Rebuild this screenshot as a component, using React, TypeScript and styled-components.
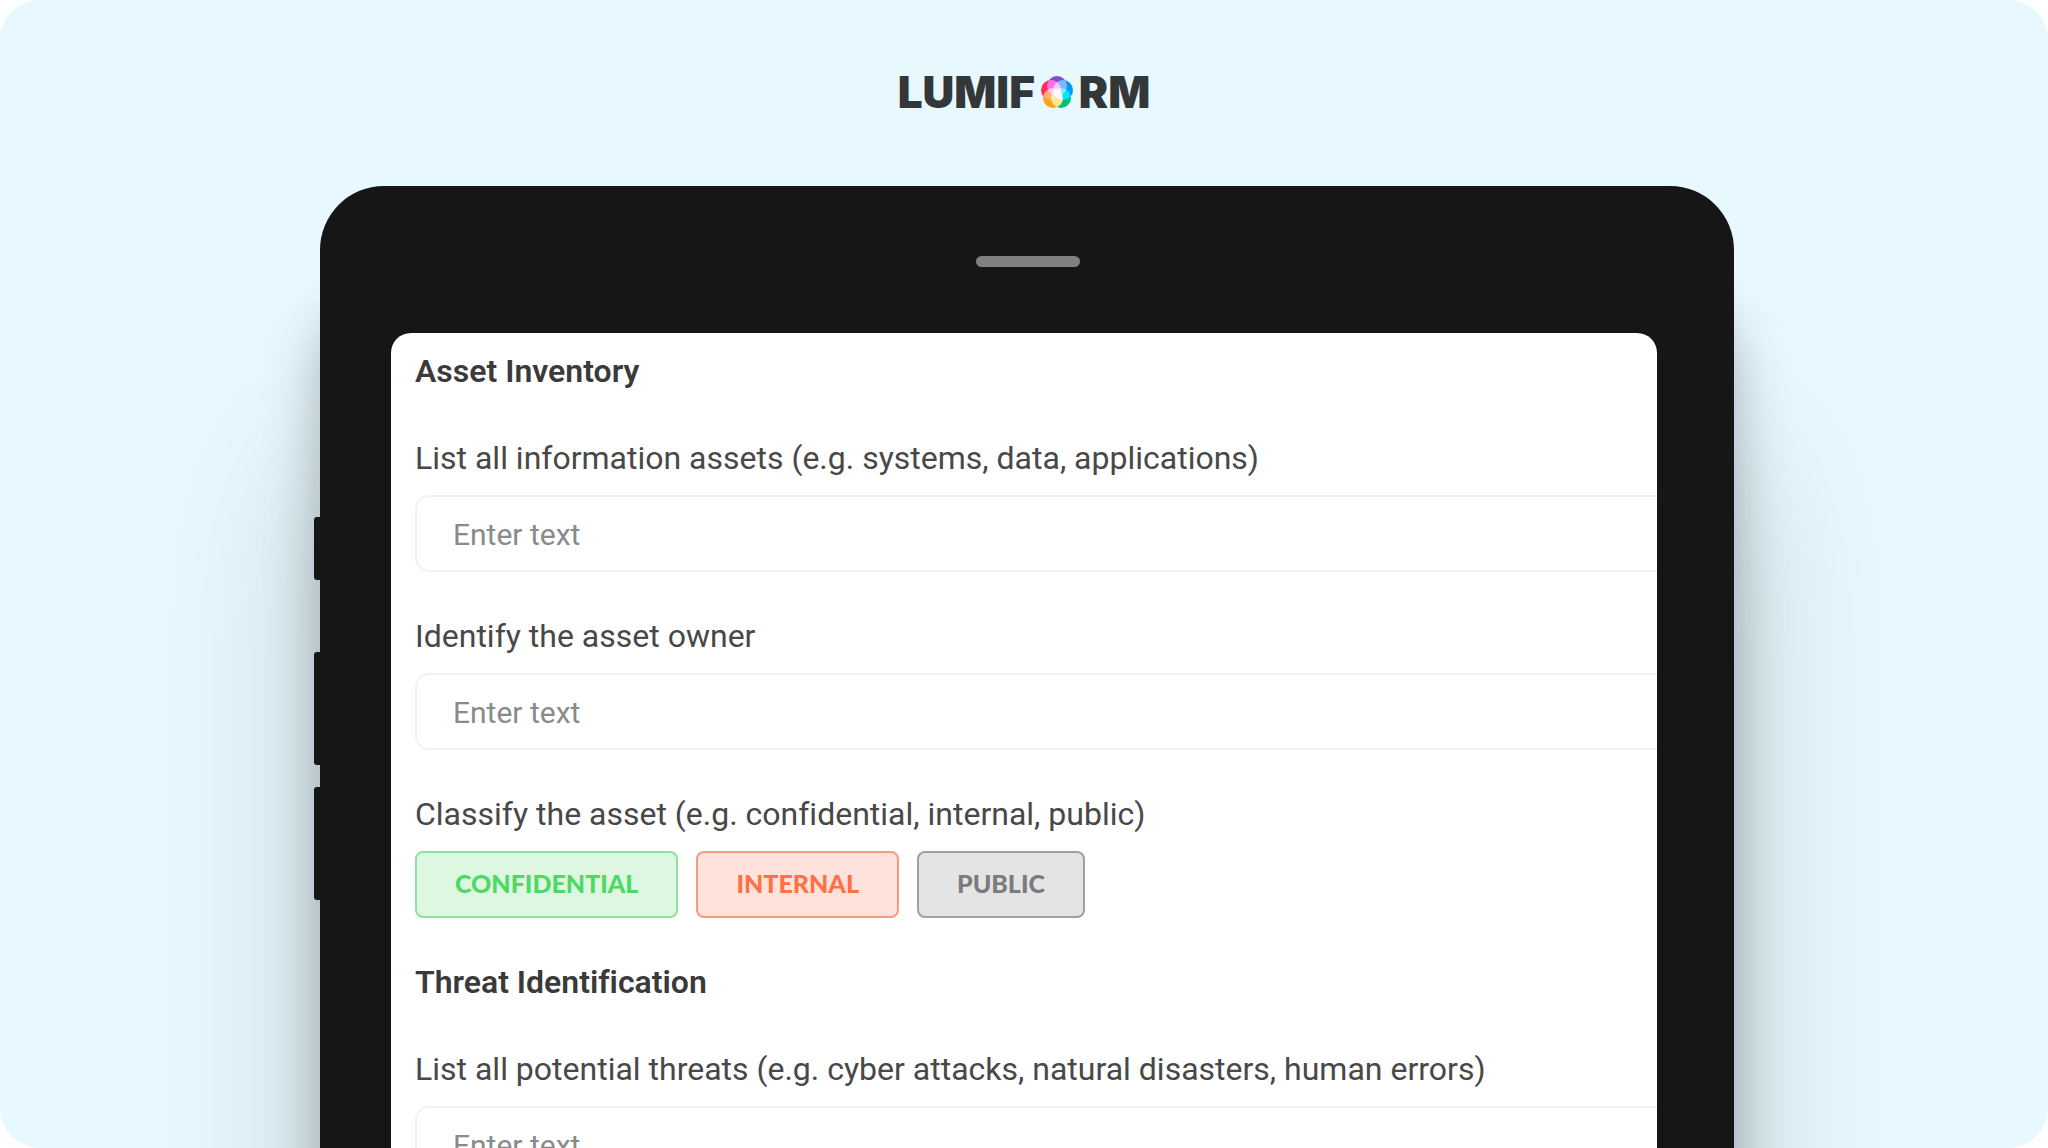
import React from "react";
import styled, { createGlobalStyle } from "styled-components";

const uiFont = `Roboto, "Open Sans", sans-serif`;

const GlobalStyle = createGlobalStyle`
  *, *::before, *::after { box-sizing: border-box; }
  body { margin: 0; background: #ffffff; }
`;

const Stage = styled.main`
  height: 100vh;
  overflow: hidden;
  display: flex;
  flex-direction: column;
  background: #e7f8fe;
  border-radius: 40px;
  font-family: ${uiFont};
  font-variant-ligatures: none;
`;

const Header = styled.header`
  flex: none;
  height: 186px;
  padding-bottom: 2px;
  display: flex;
  justify-content: center;
  align-items: center;
`;

const Wordmark = styled.h1`
  margin: 0;
  display: flex;
  align-items: center;
  color: #33373a;
  font: 900 44px/44px Inter, "Open Sans", sans-serif;
`;

const Flower = styled.svg`
  width: 32px;
  height: 32px;
  margin: 0 6px;
  isolation: isolate;

  circle { mix-blend-mode: screen; }
`;

const Device = styled.div`
  position: relative;
  flex: none;
  min-height: 130vh;
  margin: 0 314px 0 320px;
  padding: 70px 77px 70px 71px;
  display: flex;
  flex-direction: column;
  align-items: center;
  gap: 66px;
  background: #161616;
  border-radius: 64px;
  box-shadow:
    0 260px 180px rgba(0, 0, 0, 0.18),
    0 120px 54px rgba(0, 0, 0, 0.25);
`;

const SideKey = styled.span<{ $top: number; $length: number }>`
  position: absolute;
  left: -6px;
  top: ${(p) => p.$top}px;
  width: 8px;
  height: ${(p) => p.$length}px;
  background: #161616;
  border-radius: 3px 0 0 3px;
`;

const Speaker = styled.div`
  flex: none;
  width: 104px;
  height: 11px;
  margin-left: 8px;
  border-radius: 6px;
  background: #808080;
`;

const Screen = styled.form`
  flex: 1;
  align-self: stretch;
  overflow: hidden;
  padding: 18px 0 0 24px;
  background: #ffffff;
  border-radius: 20px;
`;

const Section = styled.section`
  display: flex;
  flex-direction: column;
  gap: 44px;
  margin-bottom: 44px;
`;

const SectionTitle = styled.h2`
  margin: 0 0 3px;
  color: #3a3a3a;
  font-size: 32px;
  line-height: 40px;
  font-weight: 600;
`;

const Field = styled.div`
  display: flex;
  flex-direction: column;
  gap: 17px;
`;

const Label = styled.label`
  color: #484848;
  font-size: 32px;
  line-height: 40px;
  white-space: nowrap;
`;

const TextInput = styled.input`
  height: 77px;
  margin-right: -20px;
  padding: 2px 36px 0;
  border: 2px solid #f2f2f2;
  border-radius: 14px;
  background: #ffffff;
  color: #484848;
  font: 400 30px/36px ${uiFont};
  outline: none;

  &::placeholder { color: #8a8a8a; opacity: 1; }
`;

const Choices = styled.div`
  display: flex;
  gap: 18px;
`;

const tones = {
  green: { ink: "#4cd964", line: "#8ce39b", fill: "#def7e0" },
  orange: { ink: "#ff7043", line: "#f79a80", fill: "#ffe2db" },
  grey: { ink: "#7b7b7b", line: "#a0a0a0", fill: "#e4e4e4" },
};

const Choice = styled.button<{ $tone: keyof typeof tones }>`
  height: 67px;
  padding: 0 38px 3px;
  border: 2px solid ${(p) => tones[p.$tone].line};
  border-radius: 8px;
  background: ${(p) => tones[p.$tone].fill};
  color: ${(p) => tones[p.$tone].ink};
  font: 900 25px/32px Lato, sans-serif;
  cursor: pointer;
`;

function Logo() {
  return (
    <Wordmark aria-label="Lumiform">
      LUMIF
      <Flower viewBox="0 0 32 32" aria-hidden="true">
        <circle cx="16" cy="10" r="10" fill="#7d4fd3" />
        <circle cx="22" cy="14" r="10" fill="#0098ff" />
        <circle cx="20" cy="22" r="10" fill="#00c07c" />
        <circle cx="12" cy="22" r="10" fill="#ffa21f" />
        <circle cx="10" cy="14" r="10" fill="#ff2e5b" />
      </Flower>
      RM
    </Wordmark>
  );
}

function TextField({ id, label }: { id: string; label: string }) {
  return (
    <Field>
      <Label htmlFor={id}>{label}</Label>
      <TextInput id={id} type="text" placeholder="Enter text" />
    </Field>
  );
}

export default function App() {
  return (
    <>
      <GlobalStyle />
      <Stage>
        <Header>
          <Logo />
        </Header>
        <Device>
          <SideKey $top={331} $length={63} />
          <SideKey $top={466} $length={113} />
          <SideKey $top={601} $length={113} />
          <Speaker />
          <Screen>
            <Section>
              <SectionTitle>Asset Inventory</SectionTitle>
              <TextField
                id="assets"
                label="List all information assets (e.g. systems, data, applications)"
              />
              <TextField id="owner" label="Identify the asset owner" />
              <Field role="group" aria-labelledby="classify">
                <Label as="span" id="classify">
                  Classify the asset (e.g. confidential, internal, public)
                </Label>
                <Choices>
                  <Choice type="button" $tone="green">CONFIDENTIAL</Choice>
                  <Choice type="button" $tone="orange">INTERNAL</Choice>
                  <Choice type="button" $tone="grey">PUBLIC</Choice>
                </Choices>
              </Field>
            </Section>
            <Section>
              <SectionTitle>Threat Identification</SectionTitle>
              <TextField
                id="threats"
                label="List all potential threats (e.g. cyber attacks, natural disasters, human errors)"
              />
            </Section>
          </Screen>
        </Device>
      </Stage>
    </>
  );
}
